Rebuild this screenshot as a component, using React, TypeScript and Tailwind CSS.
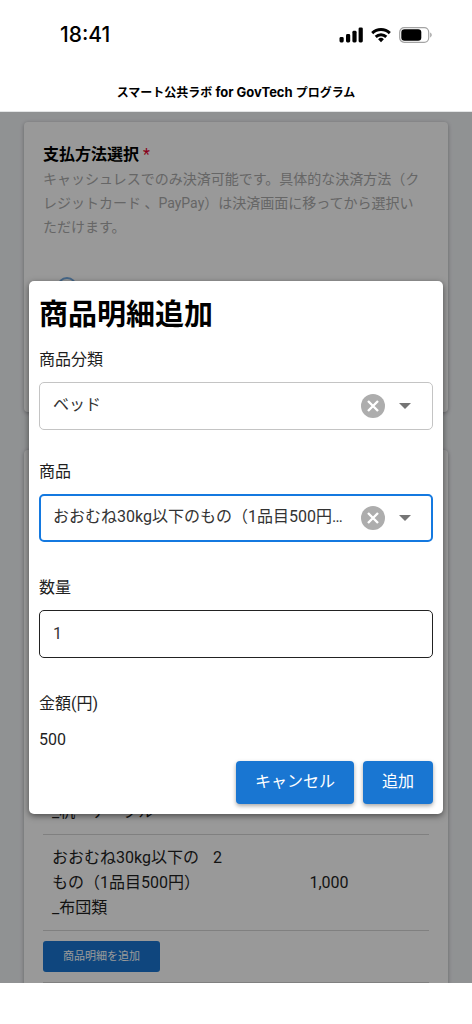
import { useState, type ReactNode } from 'react';

const CATEGORIES = ['ベッド', '布団類', '机・テーブル'];
const PRODUCTS = ['おおむね30kg以下のもの（1品目500円）_ベッド'];
const UNIT_PRICE = 500;

const DETAILS = [
  { name: 'おおむね30kg以下のもの（1品目500円）', kind: '_机・テーブル', quantity: '', amount: '' },
  { name: 'おおむね30kg以下のもの（1品目500円）', kind: '_布団類', quantity: '2', amount: '1,000' },
];

function StatusBar() {
  return (
    <div className="flex h-[70px] items-center justify-between pr-[39px] pl-[60px]">
      <span className="font-['Inter',sans-serif] text-[21px] leading-6 font-medium">
        18:41
      </span>
      <div className="flex items-center gap-[8px]">
        <svg width="24" height="16" viewBox="0 0 24 16" fill="currentColor">
          <rect x="0.5" y="10" width="4.2" height="5.4" rx="1.4" />
          <rect x="7" y="7" width="4.2" height="8.4" rx="1.4" />
          <rect x="13.4" y="3.8" width="4.2" height="11.6" rx="1.4" />
          <rect x="19.6" y="0.4" width="4.2" height="15" rx="1.4" />
        </svg>
        <svg
          width="20"
          height="16"
          viewBox="0 0 20 16"
          fill="none"
          stroke="currentColor"
          strokeWidth="2.9"
        >
          <path d="M1.2 6.1a12.6 12.6 0 0 1 17.6 0" />
          <path d="M4.7 9.9a7.6 7.6 0 0 1 10.6 0" />
          <path
            d="M10 15.2 7.1 12.3a4.1 4.1 0 0 1 5.8 0Z"
            fill="currentColor"
            stroke="none"
          />
        </svg>
        <svg width="34" height="16" viewBox="0 0 34 16">
          <rect
            x="0.7"
            y="0.7"
            width="29"
            height="14.6"
            rx="4.5"
            fill="none"
            stroke="#a3a3a3"
            strokeWidth="1.2"
          />
          <rect x="2.3" y="2.3" width="20" height="11.4" rx="3.2" />
          <path d="M31.2 5.6c2 .7 2 4.1 0 4.8Z" fill="#a3a3a3" />
        </svg>
      </div>
    </div>
  );
}

function PaymentCard() {
  return (
    <section className="h-[290px] rounded-[4px] bg-white px-[19px] pt-[21px] shadow-[0_1px_4px_rgba(0,0,0,0.3)]">
      <h2 className="text-[16px] leading-6 font-bold text-black">
        支払方法選択 <span className="font-normal text-[#e5002d]">*</span>
      </h2>
      <p className="pr-[6px] text-[14px] leading-6 text-[#aaaaaa]">
        キャッシュレスでのみ決済可能です。具体的な決済方法（クレジットカード
        、PayPay）は決済画面に移ってから選択いただけます。
      </p>
      <input
        type="radio"
        name="payment"
        aria-label="キャッシュレス"
        className="mt-[38px] ml-[14px] size-5 appearance-none rounded-full border-2 border-[#75ade5]"
      />
    </section>
  );
}

function DetailsCard() {
  return (
    <section className="rounded-[4px] bg-white px-[19px] pt-72 pb-10 shadow-[0_1px_4px_rgba(0,0,0,0.3)]">
      <table className="w-full table-fixed border-collapse text-[16px] leading-[25px] text-[#1f1f1f]">
        <colgroup>
          <col className="w-[42%]" />
          <col className="w-[19%]" />
          <col />
        </colgroup>
        <tbody>
          {DETAILS.map((detail) => (
            <tr key={detail.kind} className="border-y border-[#d6d6d6]">
              <td className="py-[10px] pl-[9px]">
                {detail.name}
                <br />
                {detail.kind}
              </td>
              <td className="py-[10px] pl-2 align-top">{detail.quantity}</td>
              <td className="py-[10px] pl-[31px]">{detail.amount}</td>
            </tr>
          ))}
          <tr className="border-b border-[#d6d6d6]">
            <td colSpan={3} className="py-[10px]">
              <button
                type="button"
                className="block h-[31px] rounded-[3px] bg-[#1976d2] px-5 text-[11px] leading-4 text-white"
              >
                商品明細を追加
              </button>
            </td>
          </tr>
        </tbody>
      </table>
    </section>
  );
}

interface SelectFieldProps {
  id: string;
  label: string;
  value: string;
  options: string[];
  focused?: boolean;
  onChange: (value: string) => void;
}

function SelectField({ id, label, value, options, focused, onChange }: SelectFieldProps) {
  return (
    <div>
      <FieldLabel htmlFor={id}>{label}</FieldLabel>
      <div className="relative mt-[10px]">
        <select
          id={id}
          value={value}
          onChange={(e) => onChange(e.target.value)}
          className={
            focused
              ? 'block h-12 w-full appearance-none truncate rounded-[5px] border-2 border-[#1479e0] bg-white pr-[82px] pb-[2px] pl-3 text-[16px] text-[#333333] outline-none'
              : 'block h-12 w-full appearance-none truncate rounded-[5px] border border-[#c4c4c4] bg-white pr-[83px] pb-[2px] pl-[13px] text-[16px] text-[#333333] outline-none'
          }
        >
          <option value=""></option>
          {options.map((option) => (
            <option key={option} value={option}>
              {option}
            </option>
          ))}
        </select>
        <button
          type="button"
          aria-label="クリア"
          onClick={() => onChange('')}
          className="absolute top-3 right-12 size-6"
        >
          <svg viewBox="0 0 24 24" className="size-6">
            <circle cx="12" cy="12" r="12" fill="#adadad" />
            <path d="m7 7 10 10M17 7 7 17" stroke="#fff" strokeWidth="2.4" />
          </svg>
        </button>
        <svg
          viewBox="0 0 12 6"
          className="pointer-events-none absolute top-[21px] right-[22px] h-[6px] w-3"
        >
          <path d="M0 0h12L6 6Z" fill="#757575" />
        </svg>
      </div>
    </div>
  );
}

function FieldLabel({ htmlFor, children }: { htmlFor: string; children: ReactNode }) {
  return (
    <label htmlFor={htmlFor} className="block text-[16px] leading-6 text-[#1f1f1f]">
      {children}
    </label>
  );
}

function AddDetailDialog() {
  const [category, setCategory] = useState(CATEGORIES[0]);
  const [product, setProduct] = useState(PRODUCTS[0]);
  const [quantity, setQuantity] = useState('1');

  const buttonClass =
    'h-[43px] rounded-[4px] bg-[#1976d2] px-[19px] pb-px text-[16px] leading-6 text-white shadow-[0_2px_4px_rgba(0,0,0,0.35)]';

  return (
    <form
      role="dialog"
      aria-labelledby="dialog-title"
      onSubmit={(e) => e.preventDefault()}
      className="w-full rounded-[5px] bg-white px-[10px] pt-3 pb-[10px] shadow-[0_2px_6px_rgba(0,0,0,0.5)]"
    >
      <h1 id="dialog-title" className="text-[29px] leading-[44px] font-bold text-black">
        商品明細追加
      </h1>
      <div className="mt-[11px]">
        <SelectField
          id="category"
          label="商品分類"
          value={category}
          options={CATEGORIES}
          onChange={setCategory}
        />
      </div>
      <div className="mt-[30px]">
        <SelectField
          id="product"
          label="商品"
          value={product}
          options={PRODUCTS}
          focused
          onChange={setProduct}
        />
      </div>
      <div className="mt-[34px]">
        <FieldLabel htmlFor="quantity">数量</FieldLabel>
        <input
          id="quantity"
          type="text"
          inputMode="numeric"
          value={quantity}
          onChange={(e) => setQuantity(e.target.value)}
          className="mt-[10px] block h-12 w-full rounded-[5px] border border-[#222222] pb-[2px] pl-[13px] text-[16px] text-[#333333] outline-none"
        />
      </div>
      <div className="mt-[34px]">
        <FieldLabel htmlFor="amount">金額(円)</FieldLabel>
        <output id="amount" className="mt-3 block text-[16px] leading-6 text-[#1f1f1f]">
          {Number(quantity) * UNIT_PRICE}
        </output>
      </div>
      <div className="mt-[9px] flex justify-end gap-[9px]">
        <button type="button" className={buttonClass}>
          キャンセル
        </button>
        <button type="submit" className={buttonClass}>
          追加
        </button>
      </div>
    </form>
  );
}

export default function App() {
  return (
    <div
      lang="ja"
      className="flex h-screen flex-col bg-white font-['Roboto','Noto_Sans_CJK_JP',sans-serif] text-black"
    >
      <header className="border-b border-[#e3e5e6]">
        <StatusBar />
        <p className="h-[41px] pt-3 text-center font-['Inter','Noto_Sans_CJK_JP',sans-serif] text-[12px] leading-5 font-bold">
          スマート公共ラボ
          <span className="text-[13px]"> for GovTech </span>
          プログラム
        </p>
      </header>
      <main className="relative min-h-0 flex-1 overflow-hidden bg-[#f1f3f6]">
        <div className="flex flex-col gap-[38px] px-6 pt-[10px]">
          <PaymentCard />
          <DetailsCard />
        </div>
        <div className="absolute inset-0 flex items-center bg-black/40 px-[29px]">
          <AddDetailDialog />
        </div>
      </main>
      <footer className="h-[41px] bg-white" />
    </div>
  );
}
